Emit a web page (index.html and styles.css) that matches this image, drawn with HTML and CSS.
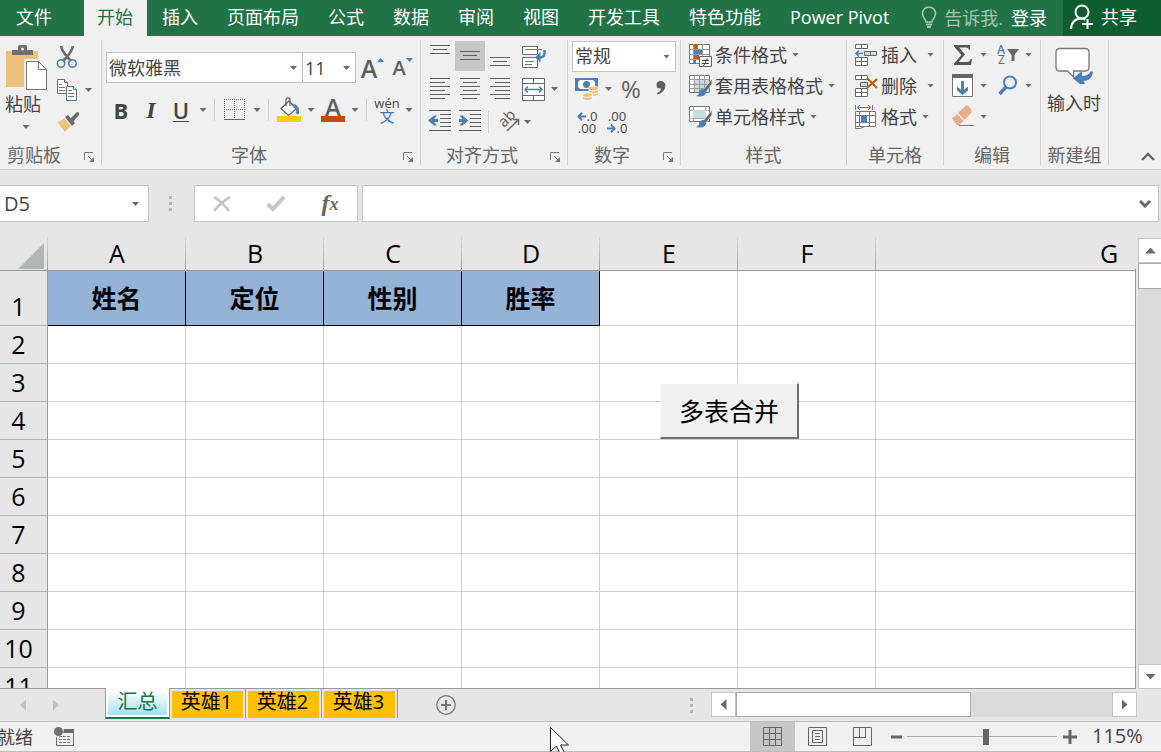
FILE: index.html
```html
<!DOCTYPE html>
<html lang="zh-CN">
<head>
<meta charset="utf-8">
<title>汇总</title>
<link rel="stylesheet" href="styles.css">
</head>
<body>
<nav class="tabs">
  <button class="tab tab-file">文件</button>
  <button class="tab tab-active">开始</button>
  <button class="tab">插入</button>
  <button class="tab">页面布局</button>
  <button class="tab">公式</button>
  <button class="tab">数据</button>
  <button class="tab">审阅</button>
  <button class="tab">视图</button>
  <button class="tab">开发工具</button>
  <button class="tab">特色功能</button>
  <button class="tab">Power Pivot</button>
  <span class="tabs-right">
    <button class="tell"><svg width="16" height="24" viewBox="0 0 16 24" fill="none" stroke="#a3c4b0" stroke-width="1.6"><path d="M5 16C5 13 1.5 12 1.5 7.500a6.500 6.500 0 0 1 13 0C14.500 12 11 13 11 16z"/><path d="M5 18.500h6M6 21h4" stroke-width="2"/></svg>告诉我.</button>
    <button class="login">登录</button>
    <button class="share"><svg width="24" height="26" viewBox="0 0 24 26" fill="none" stroke="#fff" stroke-width="2"><circle cx="12" cy="8" r="6.500"/><path d="M1 25c0-6 4-10.500 10-10.500 2 0 3 .3 4.500 1M17.500 15v10M12 20h11"/></svg>共享</button>
  </span>
</nav>

<div class="ribbon">
  <section class="group g-clip">
    <div class="body row top">
      <button class="paste">
        <svg width="42" height="46" viewBox="0 0 42 46"><path fill="#eac27c" d="M1 6h32v36H1z"/><path fill="#6f6f6f" d="M7 5h6V2q0-2 2-2h5q2 0 2 2v3h6v5H7z"/><circle cx="17.500" cy="4" r="1.500" fill="#f0f0f0"/><path fill="#f0f0f0" d="M19 14h21v32H19z"/><path fill="#fff" stroke="#777" d="M21.500 16.500h12l8 8v20h-20z"/><path fill="none" stroke="#777" d="M33.500 16.500v8h8"/></svg>
        <span>粘贴</span><i class="caret"></i>
      </button>
      <div class="clip-side">
        <button aria-label="剪切"><svg width="22" height="24" viewBox="0 0 22 24" fill="none"><path d="M5 1q1 5 7 12l3 3M17 1q-1 5-7 12l-3 3" stroke="#6a6a6a" stroke-width="2.600"/><circle cx="5" cy="18.500" r="3.700" stroke="#4a7fb9" stroke-width="1.600"/><circle cx="16.500" cy="18.500" r="3.700" stroke="#4a7fb9" stroke-width="1.600"/></svg></button>
        <button class="split" aria-label="复制"><svg width="22" height="24" viewBox="0 0 22 24" fill="#fff" stroke="#6a6a6a"><path d="M1.500 1.500h7l3 3v11h-10z"/><path d="M8.500 1.500v3h3" /><path d="M3 6.500h3M3 9.500h6M3 12.500h6" stroke="#4a7fb9"/><path d="M10.500 8.500h7l3 3v11h-10z"/><path d="M17.500 8.500v3h3"/><path d="M12 12.500h4M12 15.500h6M12 18.500h6" stroke="#4a7fb9"/></svg><i class="caret"></i></button>
        <button aria-label="格式刷"><svg width="24" height="22" viewBox="0 0 24 22"><path d="M1 11q5-1 7-4l7 8q-3 2-6 6z" fill="#eac27c"/><path d="M9 6l3-2 7 8-3 3z" fill="#6a6a6a"/><path d="M14 8l7-7q3 0 2 3l-6 7z" fill="#6a6a6a"/></svg></button>
      </div>
    </div>
    <footer><span>剪贴板</span><button class="launch" aria-label="剪贴板选项"><svg width="11" height="11" viewBox="0 0 11 11" fill="none" stroke="#777"><path d="M.5 8V.5H9M4 4l5 5"/><path d="M10 5v5H5z" fill="#777" stroke="none"/></svg></button></footer>
  </section>

  <section class="group g-font">
    <div class="body fontbody">
      <div class="row">
        <label class="combo c-font"><select aria-label="字体"><option>微软雅黑</option></select></label>
        <label class="combo c-size"><select aria-label="字号"><option>11</option></select></label>
        <button class="w30 grow-a" aria-label="增大字号"><b>A</b><svg width="7" height="4" viewBox="0 0 7 4"><path d="M0 4l3.500-4L7 4z" fill="#4a7fb9"/></svg></button>
        <button class="w30 grow-a small-a" aria-label="减小字号"><b>A</b><svg width="7" height="4" viewBox="0 0 7 4"><path d="M0 0h7L3.500 4z" fill="#4a7fb9"/></svg></button>
      </div>
      <div class="row row30">
        <button class="w30 bold">B</button>
        <button class="w30 italic">I</button>
        <button class="w30 under">U</button>
        <button class="w14" aria-label="下划线"><i class="caret"></i></button>
        <i class="sep"></i>
        <button class="w30" aria-label="边框"><svg width="22" height="22" viewBox="0 0 22 22" fill="none" stroke="#666" shape-rendering="crispEdges"><path d="M0 .5h22M0 10.500h22M.5 0v20M10.500 0v20M20.500 0v20" stroke-dasharray="1 1"/><path d="M0 20.500h21"/></svg></button>
        <button class="w14" aria-label="边框选项"><i class="caret"></i></button>
        <i class="sep"></i>
        <button class="w30" aria-label="填充颜色"><svg width="24" height="26" viewBox="0 0 24 26"><path d="M0 19h24v6H0z" fill="#fc0"/><path d="M4 11.500L12 4l7 8-7.500 6.500z" fill="#fff" stroke="#666" stroke-width="1.300"/><path d="M9 9V3q0-2 2-2t2 2v6" fill="none" stroke="#666" stroke-width="1.300"/><path d="M15 6q8 2 7 10-2 3-3 0 1-5-4-10z" fill="#4a7fb9"/></svg></button>
        <button class="w14" aria-label="填充选项"><i class="caret"></i></button>
        <button class="w30 color-a" aria-label="字体颜色"><b>A</b></button>
        <button class="w14" aria-label="字体颜色选项"><i class="caret"></i></button>
        <i class="sep"></i>
        <button class="w30 pinyin" aria-label="拼音"><span>wén</span><span class="wen">文</span></button>
        <button class="w14" aria-label="拼音选项"><i class="caret"></i></button>
      </div>
    </div>
    <footer><span>字体</span><button class="launch" aria-label="字体选项"><svg width="11" height="11" viewBox="0 0 11 11" fill="none" stroke="#777"><path d="M.5 8V.5H9M4 4l5 5"/><path d="M10 5v5H5z" fill="#777" stroke="none"/></svg></button></footer>
  </section>

  <section class="group g-align">
    <div class="body alignbody">
      <div class="row row30">
        <button aria-label="顶端对齐"><svg class="al" viewBox="0 0 30 30"><path d="M5 4.500h20M8 8.500h14M5 12.500h20"/></svg></button>
        <button class="on" aria-label="垂直居中"><svg class="al" viewBox="0 0 30 30"><path d="M5 10.500h20M8 14.500h14M5 18.500h20"/></svg></button>
        <button aria-label="底端对齐"><svg class="al" viewBox="0 0 30 30"><path d="M5 16.500h20M8 20.500h14M5 24.500h20"/></svg></button>
        <button class="w38" aria-label="自动换行"><svg width="24" height="24" viewBox="0 0 24 24" fill="#fff" stroke="#6a6a6a"><path d="M.5 2.500h15v8H.5zM.5 13.500h15v10H.5z"/><path d="M3 5.500h17" fill="none" stroke="#4a7fb9"/><path d="M22.500 6v3q0 4-4 4.500h-2" fill="none" stroke="#4a7fb9" stroke-width="2.400"/><path d="M3 17.500h9M3 20.500h7" stroke="#4a7fb9"/><path d="M18.500 8v10.500L13 13.500z" fill="#4a7fb9" stroke="none"/></svg></button>
      </div>
      <div class="row row30">
        <button aria-label="左对齐"><svg class="al" viewBox="0 0 30 30"><path d="M5 4.500h20M5 8.500h15M5 12.500h20M5 16.500h15M5 20.500h20M5 24.500h15"/></svg></button>
        <button aria-label="居中"><svg class="al" viewBox="0 0 30 30"><path d="M5 4.500h20M8 8.500h14M5 12.500h20M8 16.500h14M5 20.500h20M8 24.500h14"/></svg></button>
        <button aria-label="右对齐"><svg class="al" viewBox="0 0 30 30"><path d="M5 4.500h20M10 8.500h15M5 12.500h20M10 16.500h15M5 20.500h20M10 24.500h15"/></svg></button>
        <button class="w36" aria-label="合并后居中"><svg width="23" height="23" viewBox="0 0 23 23" fill="#fff" stroke="#666"><path d="M.5.500h22v22H.5zM.5 5.500h22M.5 17.500h22M11.500.500v5M11.500 17.500v5"/><path d="M3 11.500h17M6 8.500l-3 3 3 3M17 8.500l3 3-3 3" fill="none" stroke="#4a7fb9" stroke-width="1.500"/></svg></button>
        <button class="w14 flushl" aria-label="合并选项"><i class="caret"></i></button>
      </div>
      <div class="row row30">
        <button aria-label="减少缩进"><svg class="al" viewBox="0 0 30 30"><path d="M4 3.500h22M15 7.500h11M15 11.500h11M15 15.500h11M15 19.500h11M4 23.500h22"/><path class="bl" d="M3 13.500l6-5h3l-3 3.500h4v3H9l3 3.500H9z"/></svg></button>
        <button aria-label="增加缩进"><svg class="al" viewBox="0 0 30 30"><path d="M4 3.500h22M15 7.500h11M15 11.500h11M15 15.500h11M15 19.500h11M4 23.500h22"/><path class="bl" d="M13.500 13.500l-6-5h-3l3 3.500H4v3h3.500l-3 3.500h3z"/></svg></button>
        <i class="sep sep-tight"></i>
        <button aria-label="方向"><svg width="22" height="22" viewBox="0 0 22 22" overflow="visible"><text class="orient" x="0" y="0" transform="translate(6 17) rotate(-45)">ab</text><path d="M9 20L20 9M15 8.500h5.500V14" fill="none" stroke="#666" stroke-width="1.500"/></svg></button>
        <button class="w14 flushl" aria-label="方向选项"><i class="caret"></i></button>
      </div>
    </div>
    <footer><span>对齐方式</span><button class="launch" aria-label="对齐选项"><svg width="11" height="11" viewBox="0 0 11 11" fill="none" stroke="#777"><path d="M.5 8V.5H9M4 4l5 5"/><path d="M10 5v5H5z" fill="#777" stroke="none"/></svg></button></footer>
  </section>

  <section class="group g-num">
    <div class="body alignbody">
      <div class="row"><label class="combo c-num"><select aria-label="数字格式"><option>常规</option></select></label></div>
      <div class="row row30">
        <button class="w30 flushl" aria-label="会计格式"><svg width="24" height="24" viewBox="0 0 24 24"><path d="M0 1h23v13H0z" fill="#4a7fb9"/><path d="M3 5l2-2h13l2 2v5l-2 2H5l-2-2z" fill="#fff"/><circle cx="11.500" cy="7.500" r="3.500" fill="#4a7fb9"/><g fill="#eac27c" stroke="#fff" stroke-width=".8"><ellipse cx="18.500" cy="17" rx="5" ry="2.300"/><ellipse cx="18.500" cy="14.500" rx="5" ry="2.300"/><ellipse cx="18.500" cy="11.500" rx="5" ry="2.300"/><ellipse cx="12.500" cy="21" rx="5" ry="2.300"/><ellipse cx="12.500" cy="18" rx="5" ry="2.300"/></g></svg></button>
        <button class="w14 flushl" aria-label="会计选项"><i class="caret"></i></button>
        <button class="w30 pct">%</button>
        <button class="w30" aria-label="千位分隔"><svg width="10" height="18" viewBox="0 0 10 18"><path d="M9.500 5q0 7-8 9.500L1 13q4-2 4-4.500Q.5 9 .5 5 .5 1 4.500 1t5 4z" fill="#5f5f5f"/></svg></button>
      </div>
      <div class="row row30">
        <button class="w30 dec" aria-label="增加小数位"><span><svg width="9" height="9" viewBox="0 0 9 9"><path d="M9 4.500H2M5 .8L1.300 4.500 5 8.200" fill="none" stroke="#4a7fb9" stroke-width="2"/></svg>.0</span><span>.00</span></button>
        <button class="w30 dec" aria-label="减少小数位"><span>.00</span><span><svg width="9" height="9" viewBox="0 0 9 9"><path d="M0 4.500h7M4 .8l3.700 3.700L4 8.200" fill="none" stroke="#4a7fb9" stroke-width="2"/></svg>.0</span></button>
      </div>
    </div>
    <footer><span>数字</span><button class="launch" aria-label="数字选项"><svg width="11" height="11" viewBox="0 0 11 11" fill="none" stroke="#777"><path d="M.5 8V.5H9M4 4l5 5"/><path d="M10 5v5H5z" fill="#777" stroke="none"/></svg></button></footer>
  </section>

  <section class="group g-style">
    <div class="body list">
      <button class="item"><svg width="24" height="24" viewBox="0 0 24 24"><path d="M1.500 1.500h20v19h-20z" fill="#fff" stroke="#777"/><path d="M1 6.500h20M1 11.500h20M1 16.500h20M5.500 1v19M14.500 1v19" stroke="#999"/><path d="M6 1h4v5H6zM6 12h5v4H6z" fill="#c55a11"/><path d="M6 7h8v4H6zM6 17h2v4H6z" fill="#4a7fb9"/><path d="M11.500 13.500h12v10h-12z" fill="#fff" stroke="#666"/><path d="M14 17.500h7M14 20.500h7M19.500 15l-4 8" stroke="#444"/></svg><span>条件格式</span><i class="caret"></i></button>
      <button class="item"><svg width="24" height="24" viewBox="0 0 24 24"><path d="M1.500 1.500h20v17h-20z" fill="#fff" stroke="#777"/><path d="M6 6h15v12H6z" fill="#c5dbe3"/><path d="M1 5.500h20M1 10.500h20M1 14.500h20M6.500 1v17M11.500 1v17M16.500 1v17" stroke="#999"/><path d="M24 5v5l-6 8-3-2z" fill="#666" stroke="#f0f0f0" stroke-width=".7"/><path d="M14 15q4 0 4 4-2 5-10 3 3-1 3-3 0-3 3-4z" fill="#4a7fb9"/></svg><span>套用表格格式</span><i class="caret"></i></button>
      <button class="item"><svg width="24" height="24" viewBox="0 0 24 24"><path d="M1.500 1.500h20v15h-20z" fill="#fff" stroke="#777"/><path d="M1 5.500h20M1 13.500h20M5.500 1v15M17.500 1v15" stroke="#aaa"/><path d="M5 5h13v8H5z" fill="#c5dbe3"/><path d="M24 5v5l-6 8-3-2z" fill="#666" stroke="#f0f0f0" stroke-width=".7"/><path d="M14 15q4 0 4 4-2 5-10 3 3-1 3-3 0-3 3-4z" fill="#4a7fb9"/></svg><span>单元格样式</span><i class="caret"></i></button>
    </div>
    <footer><span>样式</span></footer>
  </section>

  <section class="group g-cell">
    <div class="body list">
      <button class="item"><svg width="24" height="24" viewBox="0 0 24 24" fill="#fff" stroke="#666"><path d="M1.500 1.500h12v4h-12zM7.500 1.500v4M1.500 14.500h12v8h-12zM7.500 14.500v8M1.500 18.500h12"/><path d="M10.500 8.500h12v4h-12zM16.500 8.500v4" fill="#c5dbe3"/><path d="M9 10.500H2M5 7.500l-3 3 3 3" fill="none" stroke="#4a7fb9" stroke-width="1.700"/></svg><span>插入</span><i class="caret wide"></i></button>
      <button class="item"><svg width="24" height="24" viewBox="0 0 24 24" fill="#fff" stroke="#666"><path d="M13.500 2.500v3h-12v-4h12M7.500 1.500v4M1.500 14.500h12v8h-12zM7.500 14.500v8M1.500 18.500h12"/><path d="M6.500 8.500h7v4h-7z" fill="#c5dbe3"/><path d="M13 4l10 10M23 5L13 14" stroke="#c55a11" stroke-width="2"/></svg><span>删除</span><i class="caret wide"></i></button>
      <button class="item"><svg width="24" height="24" viewBox="0 0 24 24" fill="#fff" stroke="#666"><path d="M1.500 6.500h20v15h-20zM1.500 10.500h20M1.500 17.500h20M5.500 6.500v15M15.500 6.500v15M1.500 21.500v2h5l4-2" stroke="#777"/><path d="M7 10h6v7H7z" fill="#4a7fb9" stroke="none"/><path d="M1.500 0v5M18.500 0v5M4 2.500h12M6 0L3.500 2.500 6 5M14 0l2.500 2.500L14 5" fill="none" stroke="#4a7fb9"/></svg><span>格式</span><i class="caret"></i></button>
    </div>
    <footer><span>单元格</span></footer>
  </section>

  <section class="group g-edit">
    <div class="body list editlist">
      <div class="row row31">
        <button class="w30" aria-label="求和"><svg width="18" height="20" viewBox="0 0 18 20"><path d="M0 0h16v5h-1q0-2.500-3-2.500H5L11 9.500 4.500 17H13q3 0 3.500-3H18l-1 6H0v-1.500L7.500 10 0 1.500z" fill="#555"/></svg></button><i class="caret"></i>
        <button class="w30" aria-label="排序和筛选"><svg width="22" height="24" viewBox="0 0 22 24" overflow="visible"><text x="0" y="11" class="az azb">A</text><text x="1" y="21" class="az">Z</text><path d="M10 6h12l-4.500 6v6h-3v-6z" fill="#666"/></svg></button><i class="caret"></i>
      </div>
      <div class="row row31">
        <button class="w30" aria-label="填充"><svg width="22" height="24" viewBox="0 0 22 24"><path d="M.5.500h20v22H.5z" fill="#fff" stroke="#777"/><path d="M0 0h21v4H0z" fill="#666"/><path d="M10.500 7v10" stroke="#4a7fb9" stroke-width="3"/><path d="M5 12.500v4l5.500 4.500 5.500-4.500v-4L10.500 17z" fill="#4a7fb9"/></svg></button><i class="caret"></i>
        <button class="w30" aria-label="查找"><svg width="20" height="22" viewBox="0 0 20 22" fill="none" stroke="#4a7fb9"><circle cx="12" cy="7.500" r="6" stroke-width="2"/><path d="M8 12l-6.500 7" stroke-width="3.400"/></svg></button><i class="caret"></i>
      </div>
      <div class="row row31">
        <button class="w30" aria-label="清除"><svg width="22" height="24" viewBox="0 0 22 24"><path d="M0 13.500L5 9l6.500 7-4 4H5z" fill="#e6ae8a"/><path d="M6 8l8-7.500h2L19.500 5v2.500L12.500 15z" fill="#e6ae8a"/><path d="M7 20.500h15" stroke="#777"/></svg></button><i class="caret"></i>
      </div>
    </div>
    <footer><span>编辑</span></footer>
  </section>

  <section class="group g-new">
    <div class="body">
      <button class="comment"><svg width="38" height="38" viewBox="0 0 38 38"><path d="M5 1.500h25q4 0 4 4V20q0 4-4 4H18.500v6l-6-6H5q-4 0-4-4V5.500q0-4 4-4z" fill="#fff" stroke="#777" stroke-width="1.300"/><path d="M18 31.500l9-7.500v5q6 0 8.500-4.500H38q-.500 9-9.500 9.500L30 37h-5z" fill="#4a7fb9"/></svg><span>输入时</span></button>
    </div>
    <footer><span>新建组</span></footer>
  </section>
  <button class="collapse" aria-label="折叠功能区"><svg width="14" height="9" viewBox="0 0 14 9" fill="none" stroke="#666" stroke-width="2.400"><path d="M1 8l6-6 6 6"/></svg></button>
</div>

<div class="formula">
  <label class="combo namebox"><select aria-label="名称框"><option>D5</option></select></label>
  <span class="grip"><i></i><i></i><i></i></span>
  <div class="fxbox">
    <button aria-label="取消"><svg width="18" height="16" viewBox="0 0 18 16" stroke="#c3c3c3" stroke-width="2.600" fill="none"><path d="M1 1q8 5 15 14M17 1Q8 6 1 15"/></svg></button>
    <button aria-label="输入"><svg width="20" height="17" viewBox="0 0 20 17" stroke="#c6c6c6" stroke-width="4" fill="none"><path d="M1.500 9L7 14 18 2"/></svg></button>
    <button class="fx" aria-label="插入函数"><i>f</i><i class="x">x</i></button>
  </div>
  <div class="fxinput"><input type="text" aria-label="编辑栏"><button aria-label="展开编辑栏"><svg width="12" height="8" viewBox="0 0 12 8" fill="none" stroke="#6a6a6a" stroke-width="3"><path d="M1 1l5 5 5-5"/></svg></button></div>
</div>

<main class="work">
  <div class="sheet">
    <table>
      <colgroup><col class="c0"><col class="c1"><col class="c1"><col class="c1"><col class="c1"><col class="c1"><col class="c1"><col class="c7"></colgroup>
      <thead><tr><th class="corner"><svg width="26" height="26" viewBox="0 0 26 26"><path d="M26 0v26H0z" fill="#b1b5b3"/></svg></th><th>A</th><th>B</th><th>C</th><th>D</th><th>E</th><th>F</th><th>G</th></tr></thead>
      <tbody>
        <tr class="first"><th>1</th><td class="hd">姓名</td><td class="hd">定位</td><td class="hd">性别</td><td class="hd">胜率</td><td></td><td></td><td></td></tr>
        <tr><th>2</th><td></td><td></td><td></td><td></td><td></td><td></td><td></td></tr>
        <tr><th>3</th><td></td><td></td><td></td><td></td><td></td><td></td><td></td></tr>
        <tr><th>4</th><td></td><td></td><td></td><td></td><td></td><td></td><td></td></tr>
        <tr><th>5</th><td></td><td></td><td></td><td></td><td></td><td></td><td></td></tr>
        <tr><th>6</th><td></td><td></td><td></td><td></td><td></td><td></td><td></td></tr>
        <tr><th>7</th><td></td><td></td><td></td><td></td><td></td><td></td><td></td></tr>
        <tr><th>8</th><td></td><td></td><td></td><td></td><td></td><td></td><td></td></tr>
        <tr><th>9</th><td></td><td></td><td></td><td></td><td></td><td></td><td></td></tr>
        <tr><th>10</th><td></td><td></td><td></td><td></td><td></td><td></td><td></td></tr>
        <tr><th>11</th><td></td><td></td><td></td><td></td><td></td><td></td><td></td></tr>
      </tbody>
    </table>
    <button class="merge">多表合并</button>
  </div>
  <div class="vscroll">
    <button class="sb" aria-label="向上"><i class="tri up"></i></button>
    <span class="vthumb"></span>
    <span class="track"></span>
    <button class="sb" aria-label="向下"><i class="tri down"></i></button>
  </div>
</main>

<div class="sheetbar">
  <div class="sheetnav"><button aria-label="上一张"><i class="tri left pale"></i></button><button aria-label="下一张"><i class="tri right pale"></i></button></div>
  <button class="stab-on"><span>汇总</span></button>
  <button class="stab"><span>英雄1</span></button>
  <button class="stab"><span>英雄2</span></button>
  <button class="stab"><span>英雄3</span></button>
  <button class="plus" aria-label="新工作表"><svg width="20" height="20" viewBox="0 0 20 20" fill="none" stroke="#777"><circle cx="10" cy="10" r="9.300" stroke-width="1.300"/><path d="M5 10h10M10 5v10" stroke-width="2"/></svg></button>
  <span class="grip"><i></i><i></i><i></i></span>
  <div class="hscroll">
    <button class="sb" aria-label="向左"><i class="tri left"></i></button>
    <span class="hthumb"></span>
    <span class="track"></span>
    <button class="sb" aria-label="向右"><i class="tri right"></i></button>
  </div>
</div>

<footer class="status">
  <span class="ready">就绪</span>
  <button class="rec" aria-label="录制宏"><svg width="20" height="20" viewBox="0 0 20 20"><path d="M10 2h10v4H9z" fill="#6a6a6a"/><path d="M2.500 10v8.500h17V5" fill="none" stroke="#6a6a6a"/><circle cx="4.500" cy="4.500" r="4.500" fill="#6f6f6f"/><path d="M5 9.500h12M5 12.500h12M5 15.500h12" stroke="#777" stroke-dasharray="3 1"/></svg></button>
  <div class="views">
    <button class="view on" aria-label="普通"><svg width="19" height="19" viewBox="0 0 19 19" fill="none" stroke="#666"><path d="M.5.500h18v18H.5zM6.500.500v18M12.500.500v18M.5 6.500h18M.5 12.500h18"/></svg></button>
    <button class="view" aria-label="页面布局"><svg width="19" height="19" viewBox="0 0 19 19" fill="none" stroke="#666"><path d="M.5.500h18v18H.5zM4.500 3.500h10v12h-10zM7 6.500h5M7 9.500h5M7 12.500h5"/></svg></button>
    <button class="view" aria-label="分页预览"><svg width="19" height="19" viewBox="0 0 19 19" fill="none" stroke="#666"><path d="M.5.500h18v18H.5zM.5 10.500h12V.500M6.500.500v10"/></svg></button>
  </div>
  <button class="zoom" aria-label="缩小"><svg width="14" height="14" viewBox="0 0 14 14"><path d="M1 7h11" stroke="#666" stroke-width="3"/></svg></button>
  <input class="slider" type="range" min="0" max="100" value="53" aria-label="缩放">
  <button class="zoom" aria-label="放大"><svg width="14" height="14" viewBox="0 0 14 14"><path d="M0 7h14M7 0v14" stroke="#666" stroke-width="3"/></svg></button>
  <span class="pctval">115%</span>
</footer>
<svg class="pointer" width="19" height="30" viewBox="0 0 19 30"><path d="M.5.500v24l6-5.500 4 9 4-2-4-8h8z" fill="#fff" stroke="#222"/></svg>
</body>
</html>
```
FILE: styles.css
```css
* { box-sizing: border-box; }
body {
  margin: 0;
  height: 100vh;
  display: flex;
  flex-direction: column;
  overflow: hidden;
  position: relative;
  background: #e6e6e6;
  color: #444;
  font: 18px/24px "Open Sans", "Noto Sans CJK SC", sans-serif;
}
button, select, input { font: inherit; color: inherit; margin: 0; }
button { border: 0; background: none; padding: 0; display: flex; align-items: center; justify-content: center; white-space: nowrap; }
svg { display: block; flex: none; }
footer, .row { display: flex; align-items: center; }

.tabs { display: flex; height: 36px; flex: none; background: #217346; color: #fff; }
.tab { padding: 0 14px 2px 15px; }
.tab-file { padding: 0 32px 2px 16px; }
.tab-active { padding: 0 14px 2px 13px; background: #f0f0f0; color: #217346; }
.tabs-right { display: flex; margin-left: auto; }
.tell { gap: 7px; color: #a3c4b0; padding-right: 8px; }
.login { padding-right: 16px; }
.share { background: #0f5c2f; width: 98px; gap: 7px; padding: 0 24px 2px 0; justify-content: flex-end; }

.ribbon { display: flex; flex: none; height: 134px; padding: 4px 0; background: #f0f0f0; border-bottom: 1px solid #d0d0d0; }
.group { display: flex; flex-direction: column; flex: none; border-right: 1px solid #d0d0d0; }
.body { flex: 1; }
.group footer { position: relative; justify-content: center; height: 20px; color: #666; }
.launch { position: absolute; right: 6px; bottom: 2px; }
.g-clip { width: 102px; }
.g-clip footer { justify-content: flex-start; padding-left: 7px; }
.g-font { width: 319px; }
.g-font footer { padding-right: 24px; }
.g-align { width: 147px; }
.g-align footer { padding-right: 24px; }
.g-num { width: 113px; }
.g-num footer { padding-right: 24px; }
.g-style { width: 166px; }
.g-cell { width: 97px; }
.g-edit { width: 97px; }
.g-new { width: 68px; }
.caret { flex: none; width: 7px; height: 4px; background: #6a6a6a; clip-path: polygon(0 0, 100% 0, 50% 100%); }
.sep { width: 1px; height: 22px; background: #d0d0d0; margin: 0 5px 0 4px; }
.sep-tight { margin: 0 5px 0 3px; }
.top { align-items: flex-start; }
.paste { flex-direction: column; padding: 5px 0 0 5px; }
.paste span { align-self: flex-start; margin: 1px 0 9px; }
.clip-side { display: flex; flex-direction: column; align-items: flex-start; gap: 9px; padding: 5px 0 0 9px; }
.split { gap: 7px; }

.row30 { height: 30px; }
.row30 > button { min-width: 30px; height: 30px; }
.row30 > .w14 { min-width: 14px; width: 14px; }
.row30 > .w36 { width: 36px; }
.row30 > .w38 { width: 38px; }
.w30 { width: 30px; }
.flushl { justify-content: flex-start; }
.fontbody { padding: 12px 0 0 4px; display: flex; flex-direction: column; gap: 12px; }
.combo { position: relative; display: flex; height: 31px; border: 1px solid #c3c3c3; background: #fff; }
.combo select { appearance: none; border: 0; background: none; width: 100%; padding: 0 20px 0 2px; outline: 0; }
.combo::after { content: ""; position: absolute; right: 5px; top: 13px; width: 7px; height: 4px; background: #6a6a6a; clip-path: polygon(0 0, 100% 0, 50% 100%); }
.c-font { width: 197px; }
.c-size { width: 54px; margin-left: -1px; }
.c-num { width: 104px; }
.grow-a { height: 31px; padding-left: 3px; }
.grow-a b { font-size: 25px; color: #5f5f5f; font-weight: 600; }
.grow-a svg { margin-bottom: 16px; }
.small-a b { font-size: 20px; }
.bold { font-size: 22px; font-weight: 700; }
.italic { font: italic 700 24px/24px "Liberation Serif", serif; }
.under { font-size: 22px; font-weight: 600; text-decoration: underline 1px; text-underline-offset: 2px; }
.color-a b { width: 24px; height: 24px; border-bottom: 6px solid #c44b00; font-size: 24px; line-height: 18px; color: #5f5f5f; font-weight: 600; }
.pinyin { flex-direction: column; font-size: 13px; line-height: 12px; }
.pinyin .wen { color: #3f78b5; font-size: 15px; line-height: 15px; }

.alignbody { padding: 1px 0 0 4px; display: flex; flex-direction: column; gap: 3px; }
.alignbody .row { height: 30px; }
.al { width: 30px; height: 30px; fill: none; stroke: #5f5f5f; }
.al .bl { fill: #4a7fb9; stroke: none; }
.on { background: #c6c6c6; }
.orient { font-size: 15px; fill: #555; }
.pct { font-size: 24px; color: #5f5f5f; }
.g-num .flushl { padding-left: 3px; }
.dec { flex-direction: column; align-items: center; font-size: 13px; line-height: 12px; }
.dec span { display: flex; align-items: center; gap: 1px; }
.list { display: flex; flex-direction: column; align-items: flex-start; }
.item { height: 31px; padding: 0 0 2px 7px; gap: 3px; }
.item .caret { margin-left: 2px; }
.item .wide { margin-left: 7px; }
.row31 { height: 31px; gap: 2px; padding-bottom: 2px; }
.editlist { padding-left: 4px; }
.row31 .caret + .w30 { margin-left: 4px; }
.az { font-size: 12px; fill: #666; }
.azb { fill: #4a7fb9; font-weight: 600; }
.comment { flex-direction: column; width: 100%; padding: 7px 1px 0 0; gap: 6px; }
.collapse { margin: auto 6px 4px auto; }

.formula { display: flex; flex: none; padding: 15px 2px 15px 0; }
.namebox { width: 149px; height: 37px; border-left: 0; }
.namebox select { padding-left: 4px; font-size: 20px; }
.namebox::after { right: 9px; top: 16px; }
.grip { display: flex; flex-direction: column; justify-content: center; gap: 3px; width: 45px; align-items: center; padding-right: 2px; }
.grip i { width: 3px; height: 3px; background: #b5b5b5; }
.fxbox { display: flex; width: 164px; height: 37px; border: 1px solid #c3c3c3; background: #fff; margin-right: 4px; }
.fxbox button { flex: 1; }
.fx { font: 700 24px/28px "Liberation Serif", serif; color: #666; }
.fx i { padding-bottom: 2px; }
.fx .x { font-size: 18px; padding-top: 3px; }
.fxinput { display: flex; flex: 1; border: 1px solid #c3c3c3; background: #fff; padding-right: 7px; }
.fxinput input { flex: 1; min-width: 0; border: 0; outline: 0; background: none; padding: 0 6px; }

.work { display: flex; flex: 1; min-height: 0; gap: 2px; }
.sheet { position: relative; flex: 1; min-width: 0; overflow: hidden; border: 0 solid #999; border-width: 0 1px 1px 0; border-image: linear-gradient(#e6e6e6 33px, #999 33px) 1; }
.sheet table { table-layout: fixed; width: 1342px; border-collapse: separate; border-spacing: 0; color: #000; font-size: 25px; line-height: 30px; background: #fff; }
.c0 { width: 48px; }
.c1 { width: 138px; }
.c7 { width: 466px; }
.sheet th, .sheet td { padding: 0; border: 0 solid #d0d0d0; font-weight: 400; text-align: center; }
.sheet td { height: 38px; border-width: 0 1px 1px 0; }
.sheet thead th { height: 34px; padding-bottom: 2px; border-bottom: 1px solid #999; background: linear-gradient(#d8d8d8, #a0a0a0) right / 1px 100% no-repeat #e6e6e6; }
.sheet tbody th { background: #e6e6e6; border-right: 1px solid #999; border-bottom: 1px solid #b5b5b5; padding: 0 10px 2px 0; }
.sheet thead .corner { padding: 4px 0 0 18px; }
.sheet .first th { height: 55px; vertical-align: bottom; padding-bottom: 4px; }
.sheet .hd { background: #95b3d7; border-color: #000; font-weight: 700; padding-bottom: 1px; }
.merge { position: absolute; left: 660px; top: 146px; width: 139px; height: 56px; font-size: 25px; color: #000; background: #f0f0f0; border: 1px solid #fff; border-right: 2px solid #6e6e6e; border-bottom: 2px solid #6e6e6e; }
.vscroll { display: flex; flex-direction: column; width: 23px; padding-top: 1px; }
.sb { flex: none; width: 25px; height: 25px; border: 1px solid #c3c3c3; background: #fff; }
.vthumb { height: 26px; width: 25px; border: 1px solid #aaa; background: #fff; }
.track { flex: 1; background: #dadada; }
.tri { background: #6a6a6a; }
.up { width: 11px; height: 6px; clip-path: polygon(50% 0, 100% 100%, 0 100%); }
.down { width: 11px; height: 6px; clip-path: polygon(0 0, 100% 0, 50% 100%); }
.left { width: 6px; height: 11px; clip-path: polygon(100% 0, 100% 100%, 0 50%); }
.right { width: 6px; height: 11px; clip-path: polygon(0 0, 100% 50%, 0 100%); }
.pale { background: #c0c0c0; }

.sheetbar { display: flex; flex: none; height: 33px; border-bottom: 1px solid #bdbdbd; }
.sheetnav { display: flex; width: 105px; padding-left: 20px; gap: 27px; }
.stab-on { position: relative; width: 65px; height: 31px; margin-top: -1px; padding: 2px; background: #fff; border: 1px solid #999; border-top: 0; border-bottom: 2px solid #217346; color: #217346; }
.stab-on span { flex: 1; height: 24px; background: linear-gradient(#fff, #a6dff2); font-size: 20px; line-height: 21px; }
.stab { height: 29px; padding: 2px 2px 0 2px; color: #000; width: 76px; border-right: 1px solid #999; }
.stab span { flex: 1; height: 27px; padding-right: 2px; background: #ffc000; font-size: 20px; line-height: 21px; }
.plus { margin-left: 38px; }
.sheetbar .grip { width: 39px; margin-left: auto; padding-right: 0; }
.hscroll { display: flex; width: 426px; margin: 3px 24px 0 0; height: 25px; }
.hthumb { width: 235px; border: 1px solid #aaa; background: #fff; }

.status { height: 30px; flex: none; background: #f0f0f0; border-bottom: 1px solid #bdbdbd; }
.ready { margin-left: -3px; }
.rec { margin-left: 21px; }
.views { display: flex; margin-left: auto; align-self: stretch; }
.view { width: 45px; }
.zoom { width: 14px; margin-left: 5px; }
.slider { appearance: none; width: 150px; height: 20px; margin: 0 1px 0 3px; background: linear-gradient(#aaa, #aaa) center / 100% 1px no-repeat; }
.slider::-webkit-slider-thumb { appearance: none; width: 6px; height: 16px; background: #666; }
.pctval { width: 84px; padding: 0 0 2px 15px; font-size: 20px; }
.pointer { position: absolute; left: 550px; top: 727px; }
```
